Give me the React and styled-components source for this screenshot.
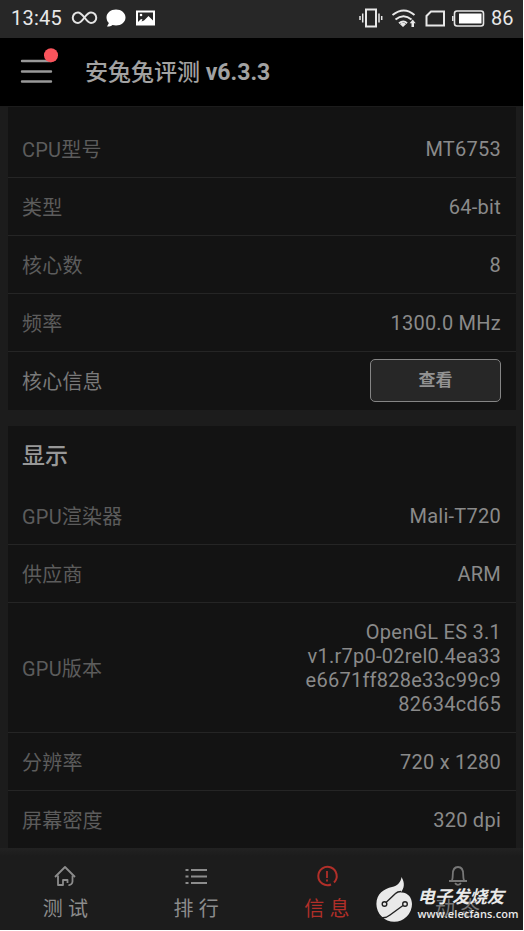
import React from 'react';
import styled, { createGlobalStyle } from 'styled-components';

const Global = createGlobalStyle`
  * { box-sizing: border-box; }
  body { margin: 0; background: #fff; font-family: Roboto, "Noto Sans CJK SC", sans-serif; }
`;

const Screen = styled.div`
  width: 523px;
  height: 930px;
  display: flex;
  flex-direction: column;
  background: #1c1c1c;
  overflow: hidden;
  position: relative;
`;

const StatusBar = styled.div`
  flex: none;
  height: 38px;
  padding: 0 9px 2px 11px;
  display: flex;
  align-items: center;
  justify-content: space-between;
  background: #272727;
  color: #e8e8e8;
  font-size: 20px;
`;

const StatusGroup = styled.div`
  display: flex;
  align-items: center;
  height: 36px;
  gap: ${(p) => p.$gap}px;
`;

const StatusText = styled.span`
  line-height: 36px;
  width: ${(p) => p.$w}px;
  white-space: nowrap;
  letter-spacing: ${(p) => p.$ls || 0}px;
`;

const Icon = styled.svg`
  display: block;
  flex: none;
  overflow: visible;
`;

const Header = styled.header`
  flex: none;
  height: 68px;
  display: flex;
  align-items: center;
  background: #000;
  padding-left: 21px;
`;

const MenuButton = styled.div`
  width: 64px;
  height: 68px;
`;

const Title = styled.h1`
  margin: 0;
  padding-top: 2px;
  font-size: 23px;
  font-weight: 500;
  line-height: 34px;
  color: #a2a2a2;
  white-space: nowrap;
`;

const Version = styled.span`
  font-weight: 700;
`;

const Content = styled.main`
  flex: 1;
  min-height: 0;
  padding: 1px 7px 0 8px;
  display: flex;
  flex-direction: column;
  gap: 16px;
`;

const Card = styled.section`
  background: #131313;
  padding-top: ${(p) => p.$top || 0}px;
`;

const CardTitle = styled.h2`
  margin: 0;
  height: 61px;
  padding: 0 14px;
  line-height: 62px;
  font-size: 23px;
  font-weight: 500;
  color: #989898;
`;

const Row = styled.div`
  height: ${(p) => p.$h || 58}px;
  padding: 0 15px 0 14px;
  display: flex;
  align-items: center;
  justify-content: space-between;
  border-bottom: ${(p) => (p.$last ? 'none' : '1px solid #252525')};
`;

const Label = styled.span`
  padding-top: 2px;
  font-size: 20px;
  line-height: 24px;
  letter-spacing: 0.2px;
  color: ${(p) => (p.$bright ? '#797979' : '#5c5c5c')};
`;

const Value = styled.span`
  padding-top: 1px;
  font-size: 20px;
  line-height: 24px;
  letter-spacing: 0.25px;
  text-align: right;
  white-space: pre-line;
  color: #8a8a8a;
`;

const ViewButton = styled.button`
  width: 131px;
  height: 43px;
  padding: 0;
  margin-bottom: 1px;
  border: 1px solid #858585;
  border-radius: 5px;
  background: #272727;
  color: #929292;
  font: 700 17px/41px Roboto, "Noto Sans CJK SC", sans-serif;
`;

const Nav = styled.nav`
  flex: none;
  height: 82px;
  display: grid;
  grid-template-columns: repeat(4, 1fr);
  background: linear-gradient(#222 0, #1c1c1c 8px);
`;

const NavItem = styled.div`
  display: flex;
  flex-direction: column;
  align-items: center;
  padding-top: 17px;
  color: ${(p) => (p.$active ? '#b12f29' : p.$dim ? '#777' : '#8c8c8c')};
`;

const NavText = styled.span`
  margin-top: 8px;
  font-size: 20px;
  line-height: 28px;
  word-spacing: 0.5px;
`;

const Watermark = styled.div`
  position: absolute;
  left: 375.5px;
  top: 876px;
  display: flex;
  gap: 5px;
  color: #e9e9e9;
`;

const WatermarkText = styled.div`
  padding-top: 9px;
  width: 102px;
`;

const Brand = styled.div`
  font: italic 700 17.5px/22px "Noto Sans CJK SC", sans-serif;
  letter-spacing: -0.2px;
  white-space: nowrap;
`;

const Site = styled.div`
  font: 600 11px/14px "Open Sans", sans-serif;
  letter-spacing: 0.1px;
  white-space: nowrap;
`;

const cpuRows = [
  ['CPU型号', 'MT6753'],
  ['类型', '64-bit'],
  ['核心数', '8'],
  ['频率', '1300.0 MHz'],
];

const gpuRows = [
  ['GPU渲染器', 'Mali-T720'],
  ['供应商', 'ARM'],
  ['GPU版本', 'OpenGL ES 3.1\nv1.r7p0-02rel0.4ea33\ne6671ff828e33c99c9\n82634cd65', 130],
  ['分辨率', '720 x 1280'],
  ['屏幕密度', '320 dpi', 57],
];

function StatusIconsLeft() {
  return (
    <Icon width="83" height="20" viewBox="0 0 83 20">
      <path d="M11.500 9.500C8.700 6.200 7.200 4.500 5 4.500a5 5 0 0 0 0 10.500c2.200 0 3.700-1.700 6.500-5.500S15.800 4.500 18 4.500a5 5 0 0 1 0 10.500c-2.200 0-3.700-1.700-6.500-5.500z" fill="none" stroke="#e5e5e5" strokeWidth="2" />
      <path d="M43 1.500c-5.300 0-9.500 3.500-9.500 8 0 2.200 1 4.300 2.400 5.600L34 18.500c2.500 0 4.300-.5 5.500-1.500 1 .3 2.200.5 3.500.5 5.300 0 9.500-3.500 9.500-8s-4.200-8-9.500-8z" fill="#fff" />
      <path fillRule="evenodd" d="M63 2.500h19v15H63zM65 4.500v11h15v-11z" fill="#fff" />
      <path d="M65 14l3-3 1.500.5-1 2 2.500-1L75.500 8l4.500 4.500v3.500H65z" fill="#fff" />
      <circle cx="68" cy="7" r="1.300" fill="#fff" />
    </Icon>
  );
}

function StatusIconsRight() {
  return (
    <Icon width="126" height="22" viewBox="0 0 126 22" fill="none" stroke="#e8e8e8" strokeWidth="2">
      <rect x="7" y="2.500" width="10" height="17" />
      <path d="M3.700 6.500v9M1 9v4M20 6.500v9M22.700 9v4" strokeWidth="1.500" />
      <path d="M33.500 8q11.500-9 22 0M36.500 12.500q8-6.500 16 0M40 16.300q4.500-3.500 8 0" />
      <path d="M41 17.200a4 4 0 0 1 6 0L44 20zM52.500 15.500h2.500v4.500h-2.500z" fill="#e8e8e8" stroke="none" />
      <path d="M53.700 12.500l3 3.800h-6z" fill="#e8e8e8" stroke="none" />
      <path d="M67.500 18.500V9L72 4.500H85v14z" />
      <rect x="95.500" y="4" width="29" height="15" rx="2.500" strokeWidth="1.600" />
      <rect x="100" y="6.500" width="22.500" height="10" fill="#fff" stroke="none" />
      <path d="M93.800 9v5" strokeWidth="1.500" />
    </Icon>
  );
}

function MenuIcon() {
  return (
    <Icon width="40" height="68" viewBox="0 0 40 68">
      <path d="M1 23h29M1 33.500h29M1 43.500h29" stroke="#999" strokeWidth="2.400" strokeLinecap="round" />
      <circle cx="30" cy="17.200" r="7" fill="#f9545c" />
    </Icon>
  );
}

const navPaths = {
  home: (
    <>
      <path d="M1 12L11 2l10 10" />
      <path d="M4 10.500V20h5v-5h4.500v3M18.500 10.500v6a3.500 3.500 0 0 1-4 3.500" />
    </>
  ),
  list: <path d="M6 5h16M6 11.500h16M6 18h16M.500 5h3M.500 11.500h3M.500 18h3" strokeWidth="2" />,
  info: (
    <>
      <path d="M18 17.500A9.200 9.200 0 1 0 15 19.500" strokeWidth="2" />
      <path d="M11 6v7M11 14.500v2" />
    </>
  ),
  bell: (
    <>
      <path d="M2 16h18M5 15.500c.6-2 .8-3.500.8-6 0-4.500 2-7.500 5.200-7.500s5.200 3 5.200 7.500c0 2.500.2 4 .8 6" />
      <path d="M8 18.200q3 3.500 6 0" />
    </>
  ),
};

function NavIcon({ name }) {
  return (
    <Icon width="22" height="22" viewBox="0 0 22 22" fill="none" stroke="currentColor" strokeWidth="1.800" strokeLinejoin="round">
      {navPaths[name]}
    </Icon>
  );
}

export default function App() {
  return (
    <>
      <Global />
      <Screen>
        <StatusBar>
          <StatusGroup $gap={11}>
            <StatusText $w={51} $ls={0.25}>13:45</StatusText>
            <StatusIconsLeft />
          </StatusGroup>
          <StatusGroup $gap={6}>
            <StatusIconsRight />
            <StatusText $w={23}>86</StatusText>
          </StatusGroup>
        </StatusBar>
        <Header>
          <MenuButton><MenuIcon /></MenuButton>
          <Title>安兔兔评测 <Version>v6.3.3</Version></Title>
        </Header>
        <Content>
          <Card $top={13}>
            {cpuRows.map(([label, value]) => (
              <Row key={label}><Label>{label}</Label><Value>{value}</Value></Row>
            ))}
            <Row $last>
              <Label $bright>核心信息</Label>
              <ViewButton>查看</ViewButton>
            </Row>
          </Card>
          <Card>
            <CardTitle>显示</CardTitle>
            {gpuRows.map(([label, value, h], i) => (
              <Row key={label} $h={h} $last={i === gpuRows.length - 1}>
                <Label>{label}</Label><Value>{value}</Value>
              </Row>
            ))}
          </Card>
        </Content>
        <Nav>
          <NavItem><NavIcon name="home" /><NavText>测 试</NavText></NavItem>
          <NavItem><NavIcon name="list" /><NavText>排 行</NavText></NavItem>
          <NavItem $active><NavIcon name="info" /><NavText>信 息</NavText></NavItem>
          <NavItem $dim><NavIcon name="bell" /><NavText>动 态</NavText></NavItem>
        </Nav>
        <Watermark>
          <Icon width="37" height="47" viewBox="0 0 37 47">
            <path d="M25.500 1c3.500 6 3 11-.8 15.500C32 16 36 22 36 28a17.800 17.800 0 0 1-35.600 0C.400 18 8 12.500 16 11c5.500-1 9-5 9.500-10z" fill="#e9e9e9" />
            <path d="M10 26.500L19.500 17.500q2-2 5.500-2M1.500 40.500q7 3 12.500-1.500l13-9.500" fill="none" stroke="#222" strokeWidth="1.400" />
            <circle cx="8.500" cy="28" r="2.300" fill="#e9e9e9" stroke="#222" strokeWidth="1.400" />
            <circle cx="29" cy="28" r="2.300" fill="#e9e9e9" stroke="#222" strokeWidth="1.400" />
          </Icon>
          <WatermarkText>
            <Brand>电子发烧友</Brand>
            <Site>www.elecfans.com</Site>
          </WatermarkText>
        </Watermark>
      </Screen>
    </>
  );
}
